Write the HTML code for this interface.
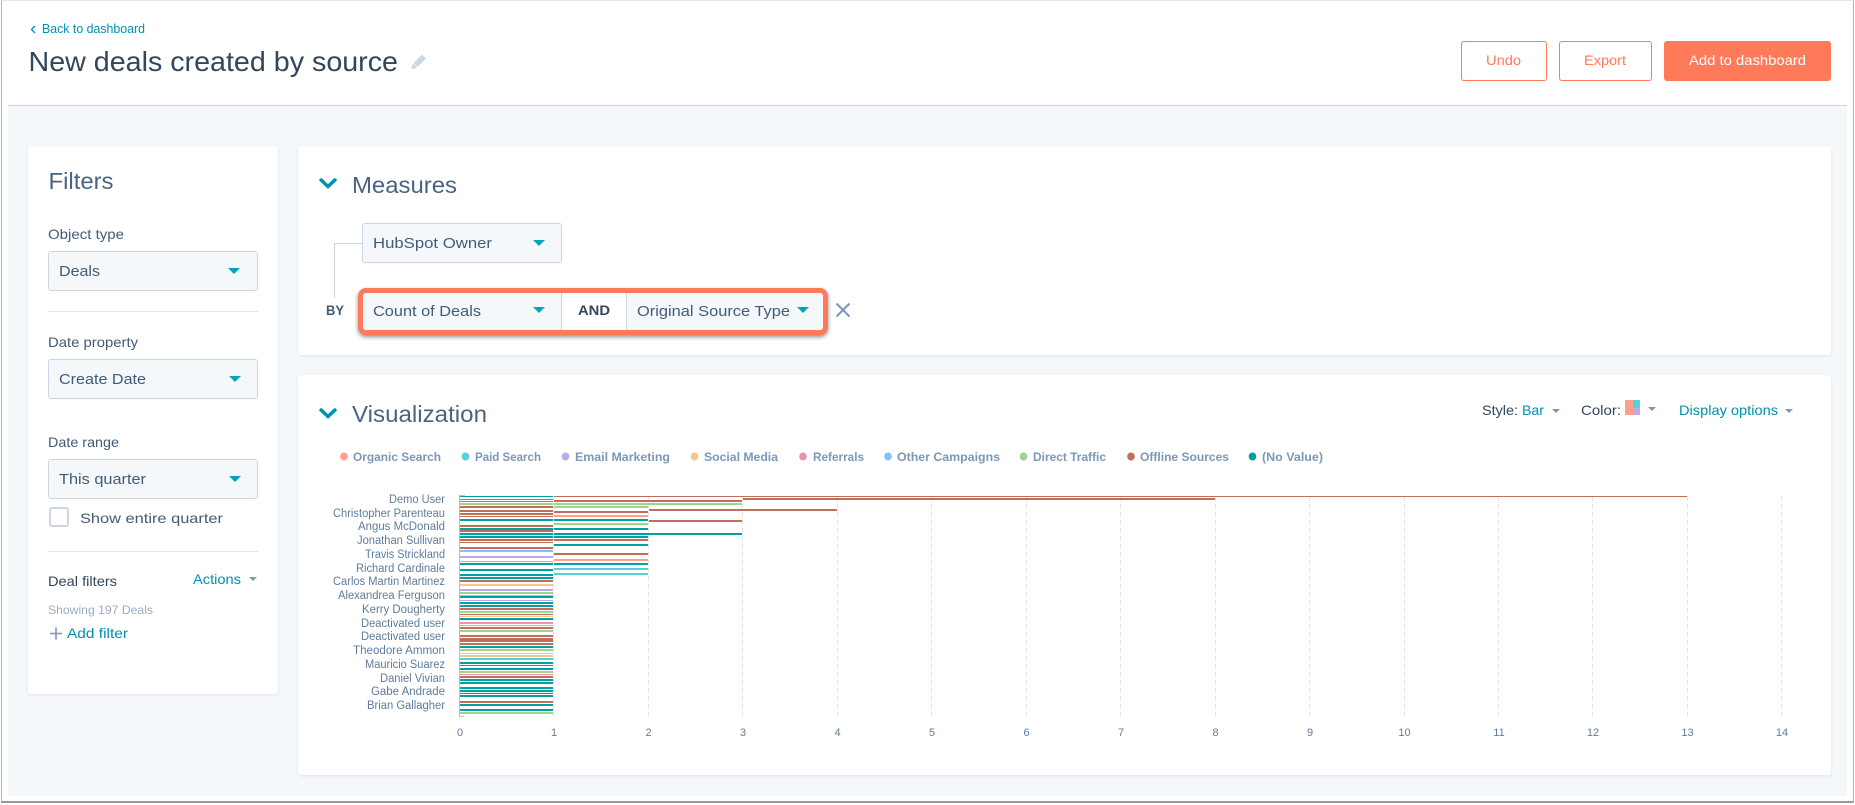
<!DOCTYPE html>
<html lang="en"><head><meta charset="utf-8"><title>New deals created by source</title>
<style>
html,body{margin:0;padding:0;width:1855px;height:805px;overflow:hidden;background:#fff}
div{position:absolute;box-sizing:border-box}
.sel{background:#f5f8fa;border:1px solid #cbd6e2;border-radius:3px}
.card{background:#fff;border-radius:3px;box-shadow:0 1px 3px rgba(45,62,80,.1)}
.btn{border:1px solid #ff7a59;border-radius:3px;background:#fff}
svg{position:absolute;left:0;top:0}
text{font-family:"Liberation Sans",sans-serif}
.d{fill:#33475b}.m{fill:#425b76}.h{fill:#4a6381}.l{fill:#0091ae}.o{fill:#ff7a59}.n{fill:#5f7c9b}.g{fill:#7c98b6;font-weight:700;font-size:12px}
.t{fill:#00a0a3}.r{fill:#c0705a}.s{fill:#ff9f8c}.c{fill:#51d3d9}.p{fill:#bda9ea}.y{fill:#f5c78e}.k{fill:#ea90b1}.b{fill:#81c1fd}.v{fill:#a2d28f}
.car{fill:#00a4bd}.gc{fill:#7c98b6}
</style></head><body>
<div style="left:1px;top:0;width:1853px;height:803px;border:1px solid #b5b5b5;border-top-color:#e6e6e6;border-bottom:2px solid #9a9a9a;background:#fff"></div>
<div style="left:8px;top:105px;width:1839px;height:691px;background:#f5f8fa;border-top:1px solid #cbd6e2"></div>
<div class="btn" style="left:1461px;top:41px;width:86px;height:40px"></div>
<div class="btn" style="left:1559px;top:41px;width:93px;height:40px"></div>
<div class="btn" style="left:1664px;top:41px;width:167px;height:40px;background:#ff7a59"></div>
<div class="card" style="left:28px;top:146px;width:250px;height:548px"></div>
<div class="card" style="left:298px;top:146px;width:1533px;height:209px"></div>
<div class="card" style="left:298px;top:375px;width:1533px;height:400px"></div>
<div class="sel" style="left:48px;top:251px;width:210px;height:40px"></div>
<div style="left:48px;top:311px;width:210px;height:1px;background:#dfe3eb"></div>
<div class="sel" style="left:48px;top:359px;width:210px;height:40px"></div>
<div class="sel" style="left:48px;top:459px;width:210px;height:40px"></div>
<div style="left:49px;top:507px;width:20px;height:20px;background:#fff;border:2px solid #cbd6e2;border-radius:3px"></div>
<div style="left:48px;top:551px;width:210px;height:1px;background:#dfe3eb"></div>
<div style="left:334px;top:243px;width:28px;height:55px;border-left:1px solid #cbd6e2;border-top:1px solid #cbd6e2"></div>
<div class="sel" style="left:362px;top:223px;width:200px;height:40px"></div>
<div style="left:358px;top:288px;width:470px;height:47px;border:5px solid #ff7a59;border-radius:8px;background:#fff;box-shadow:0 2px 4px rgba(0,0,0,.45);overflow:hidden">
<div style="left:0;top:0;width:199px;height:37px;background:#f5f8fa;border-right:1px solid #cbd6e2"></div>
<div style="left:263px;top:0;width:197px;height:37px;background:#f5f8fa;border-left:1px solid #cbd6e2"></div>
</div>
<svg width="1855" height="805" viewBox="0 0 1855 805">
<path d="M35 26l-3.500 3.500 3.500 3.500" fill="none" stroke="#0091ae" stroke-width="1.300"/>
<text x="42" y="33" font-size="13" textLength="103" lengthAdjust="spacingAndGlyphs" class="l">Back to dashboard</text>
<text x="28.500" y="71" font-size="27.500" textLength="369.500" lengthAdjust="spacingAndGlyphs" class="d">New deals created by source</text>
<path d="M422 54.500l4 4-9.500 9.500-5 1 1-5z" fill="#cbd6e2"/>
<path d="M413.500 63.500l4 4" stroke="#fff" stroke-width=".8"/>
<text x="1486" y="65" font-size="14" textLength="35" lengthAdjust="spacingAndGlyphs" class="o">Undo</text>
<text x="1584" y="65" font-size="14" textLength="42" lengthAdjust="spacingAndGlyphs" class="o">Export</text>
<text x="1689" y="65" font-size="14" textLength="117" lengthAdjust="spacingAndGlyphs" fill="#fff">Add to dashboard</text>

<text x="48.500" y="189" font-size="23" textLength="65" lengthAdjust="spacingAndGlyphs" class="h">Filters</text>
<text x="48" y="239" font-size="14" textLength="76" lengthAdjust="spacingAndGlyphs" class="m">Object type</text>
<text x="59" y="276" font-size="15" textLength="41" lengthAdjust="spacingAndGlyphs" class="m">Deals</text>
<path d="M228 268h12l-6 6z" class="car"/>
<text x="48" y="347" font-size="14" textLength="90" lengthAdjust="spacingAndGlyphs" class="m">Date property</text>
<text x="59" y="384" font-size="15" textLength="87" lengthAdjust="spacingAndGlyphs" class="m">Create Date</text>
<path d="M229 376h12l-6 6z" class="car"/>
<text x="48" y="447" font-size="14" textLength="71" lengthAdjust="spacingAndGlyphs" class="m">Date range</text>
<text x="59" y="484" font-size="15" textLength="87" lengthAdjust="spacingAndGlyphs" class="m">This quarter</text>
<path d="M229 476h12l-6 6z" class="car"/>
<text x="80" y="523" font-size="14" textLength="143" lengthAdjust="spacingAndGlyphs" class="m">Show entire quarter</text>
<text x="48" y="586" font-size="14" textLength="69" lengthAdjust="spacingAndGlyphs" class="d">Deal filters</text>
<text x="193" y="584" font-size="14" textLength="48" lengthAdjust="spacingAndGlyphs" class="l">Actions</text>
<path d="M249 577h8l-4 4z" class="gc"/>
<text x="48" y="614" font-size="12" textLength="105" lengthAdjust="spacingAndGlyphs" fill="#99acc2">Showing 197 Deals</text>
<path d="M50 633.500h12M56 627.500v12" stroke="#7c98b6" stroke-width="1.600"/>
<text x="67" y="638" font-size="14" textLength="61" lengthAdjust="spacingAndGlyphs" class="l">Add filter</text>

<path d="M320 179l8 7.500 8-7.500" fill="none" stroke="#0091ae" stroke-width="3.500"/>
<text x="352" y="193" font-size="23" textLength="105" lengthAdjust="spacingAndGlyphs" class="h">Measures</text>
<text x="373" y="248" font-size="15" textLength="119" lengthAdjust="spacingAndGlyphs" class="m">HubSpot Owner</text>
<path d="M533 240h12l-6 6z" class="car"/>
<text x="326" y="315" font-size="14" font-weight="700" textLength="18" lengthAdjust="spacingAndGlyphs" class="m">BY</text>
<text x="373" y="316" font-size="15" textLength="108" lengthAdjust="spacingAndGlyphs" class="m">Count of Deals</text>
<path d="M533 307h12l-6 6z" class="car"/>
<text x="578" y="315" font-size="14" font-weight="700" textLength="32" lengthAdjust="spacingAndGlyphs" class="d">AND</text>
<text x="637" y="316" font-size="15" textLength="153" lengthAdjust="spacingAndGlyphs" class="m">Original Source Type</text>
<path d="M797 307h12l-6 6z" class="car"/>
<path d="M836.500 303.500l13 13M849.500 303.500l-13 13" stroke="#7c98b6" stroke-width="2" fill="none"/>

<path d="M320 409l8 7.500 8-7.500" fill="none" stroke="#0091ae" stroke-width="3.500"/>
<text x="352" y="422" font-size="23" textLength="135" lengthAdjust="spacingAndGlyphs" class="h">Visualization</text>

<text x="1482" y="415" font-size="14" textLength="36" lengthAdjust="spacingAndGlyphs" class="d">Style:</text>
<text x="1522" y="415" font-size="14" textLength="22" lengthAdjust="spacingAndGlyphs" class="l">Bar</text>
<path d="M1552 409h8l-4 4z" class="gc"/>
<text x="1581" y="415" font-size="14" textLength="40" lengthAdjust="spacingAndGlyphs" class="d">Color:</text>
<rect x="1625" y="400" width="8" height="15" fill="#ff9f8c"/><rect x="1633" y="400" width="7" height="8" fill="#51d3d9"/><rect x="1633" y="408" width="7" height="7" fill="#bda9ea"/>
<path d="M1648 407h8l-4 4z" class="gc"/>
<text x="1679" y="415" font-size="14" textLength="99" lengthAdjust="spacingAndGlyphs" class="l">Display options</text>
<path d="M1785 409h8l-4 4z" class="gc"/>

<ellipse cx="344" cy="456.500" rx="3.800" ry="4" fill="#ff9f8c"/><text x="353" y="461" textLength="88" lengthAdjust="spacingAndGlyphs" class="g">Organic Search</text>
<ellipse cx="465.500" cy="456.500" rx="3.800" ry="4" fill="#51d3d9"/><text x="475" y="461" textLength="66" lengthAdjust="spacingAndGlyphs" class="g">Paid Search</text>
<ellipse cx="565.500" cy="456.500" rx="3.800" ry="4" fill="#bda9ea"/><text x="575" y="461" textLength="95" lengthAdjust="spacingAndGlyphs" class="g">Email Marketing</text>
<ellipse cx="694.500" cy="456.500" rx="3.800" ry="4" fill="#f5c78e"/><text x="704" y="461" textLength="74" lengthAdjust="spacingAndGlyphs" class="g">Social Media</text>
<ellipse cx="803" cy="456.500" rx="3.800" ry="4" fill="#ea90b1"/><text x="813" y="461" textLength="51" lengthAdjust="spacingAndGlyphs" class="g">Referrals</text>
<ellipse cx="888" cy="456.500" rx="3.800" ry="4" fill="#81c1fd"/><text x="897" y="461" textLength="103" lengthAdjust="spacingAndGlyphs" class="g">Other Campaigns</text>
<ellipse cx="1023.500" cy="456.500" rx="3.800" ry="4" fill="#a2d28f"/><text x="1033" y="461" textLength="73" lengthAdjust="spacingAndGlyphs" class="g">Direct Traffic</text>
<ellipse cx="1131" cy="456.500" rx="3.800" ry="4" fill="#c0705a"/><text x="1140" y="461" textLength="89" lengthAdjust="spacingAndGlyphs" class="g">Offline Sources</text>
<ellipse cx="1252.500" cy="456.500" rx="3.800" ry="4" fill="#00a0a3"/><text x="1262" y="461" textLength="61" lengthAdjust="spacingAndGlyphs" class="g">(No Value)</text>

<g stroke="#dfe3eb" stroke-dasharray="5 3" stroke-width="1">
<path d="M553.500 496V716M648.500 496V716M742.500 496V716M837.500 496V716M931.500 496V716M1026.500 496V716M1120.500 496V716M1215.500 496V716M1309.500 496V716M1404.500 496V716M1498.500 496V716M1592.500 496V716M1687.500 496V716M1781.500 496V716"/>
</g>
<path d="M465 495.500h-5.500V716.500h5" fill="none" stroke="#b3c2d3" stroke-width="1"/>

<g shape-rendering="crispEdges">
<rect x="460" y="496" width="93" height="1" class="t"/><rect x="554" y="496" width="1133" height="1" class="r"/>
<rect x="460" y="499" width="93" height="1" class="r"/><rect x="743" y="498" width="472" height="2" class="r"/><rect x="554" y="500" width="188" height="2" class="r"/>
<rect x="460" y="501" width="93" height="1" class="r"/>
<rect x="460" y="503" width="93" height="2" class="v"/><rect x="554" y="503" width="188" height="2" class="v"/>
<rect x="460" y="506" width="93" height="2" class="r"/><rect x="554" y="506" width="94" height="2" class="v"/>
<rect x="649" y="509" width="188" height="2" class="r"/>
<rect x="460" y="510" width="93" height="2" class="r"/><rect x="554" y="511" width="94" height="2" class="r"/>
<rect x="460" y="513" width="93" height="2" class="r"/>
<rect x="460" y="516" width="93" height="1" class="r"/><rect x="554" y="515" width="94" height="2" class="s"/>
<rect x="460" y="519" width="93" height="2" class="t"/><rect x="554" y="519" width="94" height="2" class="t"/><rect x="649" y="520" width="93" height="2" class="r"/>
<rect x="554" y="523" width="94" height="2" class="v"/><rect x="460" y="525" width="93" height="2" class="r"/>
<rect x="460" y="528" width="93" height="2" class="t"/><rect x="554" y="528" width="94" height="2" class="t"/>
<rect x="460" y="530" width="93" height="2" class="r"/>
<rect x="460" y="533" width="93" height="2" class="t"/><rect x="554" y="533" width="188" height="2" class="t"/>
<rect x="460" y="536" width="93" height="2" class="t"/><rect x="554" y="536" width="94" height="2" class="t"/>
<rect x="460" y="539" width="93" height="2" class="r"/><rect x="554" y="539" width="94" height="2" class="r"/>
<rect x="460" y="542" width="93" height="1" class="r"/><rect x="554" y="544" width="94" height="2" class="t"/>
<rect x="460" y="547" width="93" height="2" class="r"/><rect x="460" y="550" width="93" height="2" class="b"/>
<rect x="554" y="553" width="94" height="2" class="r"/><rect x="460" y="556" width="93" height="2" class="p"/>
<rect x="554" y="559" width="94" height="2" class="s"/><rect x="460" y="561" width="93" height="1" class="v"/>
<rect x="460" y="563" width="93" height="2" class="t"/><rect x="554" y="563" width="94" height="2" class="t"/>
<rect x="554" y="568" width="94" height="2" class="c"/><rect x="460" y="569" width="93" height="2" class="t"/>
<rect x="554" y="573" width="94" height="2" class="c"/><rect x="460" y="574" width="93" height="2" class="t"/>
<rect x="460" y="577" width="93" height="2" class="t"/><rect x="460" y="580" width="93" height="2" class="r"/>
<rect x="460" y="584" width="93" height="2" class="y"/><rect x="460" y="589" width="93" height="2" class="p"/>
<rect x="460" y="592" width="93" height="2" class="v"/><rect x="460" y="595" width="93" height="1" class="v"/>
<rect x="460" y="596" width="93" height="2" class="t"/><rect x="460" y="600" width="93" height="1" class="p"/>
<rect x="460" y="602" width="93" height="2" class="t"/><rect x="460" y="605" width="93" height="2" class="t"/>
<rect x="460" y="608" width="93" height="2" class="r"/><rect x="460" y="611" width="93" height="2" class="v"/>
<rect x="460" y="614" width="93" height="1" class="r"/><rect x="460" y="616" width="93" height="1" class="y"/>
<rect x="460" y="618" width="93" height="2" class="t"/><rect x="460" y="622" width="93" height="2" class="k"/>
<rect x="460" y="625" width="93" height="1" class="p"/><rect x="460" y="627" width="93" height="2" class="r"/>
<rect x="460" y="630" width="93" height="2" class="v"/><rect x="460" y="635" width="93" height="2" class="r"/>
<rect x="460" y="638" width="93" height="2" class="r"/><rect x="460" y="640" width="93" height="2" class="r"/>
<rect x="460" y="643" width="93" height="2" class="r"/><rect x="460" y="646" width="93" height="2" class="t"/>
<rect x="460" y="649" width="93" height="2" class="v"/><rect x="460" y="653" width="93" height="1" class="y"/>
<rect x="460" y="655" width="93" height="2" class="y"/><rect x="460" y="658" width="93" height="2" class="c"/>
<rect x="460" y="662" width="93" height="2" class="t"/><rect x="460" y="665" width="93" height="1" class="t"/>
<rect x="460" y="668" width="93" height="2" class="t"/><rect x="460" y="671" width="93" height="2" class="v"/>
<rect x="460" y="674" width="93" height="1" class="k"/><rect x="460" y="676" width="93" height="2" class="r"/>
<rect x="460" y="679" width="93" height="2" class="t"/><rect x="460" y="682" width="93" height="2" class="t"/>
<rect x="460" y="687" width="93" height="2" class="t"/><rect x="460" y="690" width="93" height="2" class="t"/>
<rect x="460" y="693" width="93" height="1" class="t"/><rect x="460" y="695" width="93" height="2" class="t"/>
<rect x="460" y="701" width="93" height="2" class="r"/><rect x="460" y="704" width="93" height="2" class="t"/>
<rect x="460" y="709" width="93" height="2" class="t"/><rect x="460" y="712" width="93" height="2" class="v"/>
</g>

<g font-size="11.500" text-anchor="end" class="n">
<text x="445" y="503" textLength="56" lengthAdjust="spacingAndGlyphs">Demo User</text>
<text x="445" y="517" textLength="112" lengthAdjust="spacingAndGlyphs">Christopher Parenteau</text>
<text x="445" y="530" textLength="87" lengthAdjust="spacingAndGlyphs">Angus McDonald</text>
<text x="445" y="544" textLength="88" lengthAdjust="spacingAndGlyphs">Jonathan Sullivan</text>
<text x="445" y="558" textLength="80" lengthAdjust="spacingAndGlyphs">Travis Strickland</text>
<text x="445" y="572" textLength="89" lengthAdjust="spacingAndGlyphs">Richard Cardinale</text>
<text x="445" y="585" textLength="112" lengthAdjust="spacingAndGlyphs">Carlos Martin Martinez</text>
<text x="445" y="599" textLength="107" lengthAdjust="spacingAndGlyphs">Alexandrea Ferguson</text>
<text x="445" y="613" textLength="83" lengthAdjust="spacingAndGlyphs">Kerry Dougherty</text>
<text x="445" y="627" textLength="84" lengthAdjust="spacingAndGlyphs">Deactivated user</text>
<text x="445" y="640" textLength="84" lengthAdjust="spacingAndGlyphs">Deactivated user</text>
<text x="445" y="654" textLength="92" lengthAdjust="spacingAndGlyphs">Theodore Ammon</text>
<text x="445" y="668" textLength="80" lengthAdjust="spacingAndGlyphs">Mauricio Suarez</text>
<text x="445" y="682" textLength="65" lengthAdjust="spacingAndGlyphs">Daniel Vivian</text>
<text x="445" y="695" textLength="74" lengthAdjust="spacingAndGlyphs">Gabe Andrade</text>
<text x="445" y="709" textLength="78" lengthAdjust="spacingAndGlyphs">Brian Gallagher</text>
</g>
<g font-size="11" text-anchor="middle" class="n">
<text x="460" y="736">0</text><text x="554" y="736">1</text><text x="648.500" y="736">2</text><text x="743" y="736">3</text><text x="837.500" y="736">4</text><text x="932" y="736">5</text><text x="1026.500" y="736">6</text><text x="1121" y="736">7</text><text x="1215.500" y="736">8</text><text x="1310" y="736">9</text><text x="1404.500" y="736">10</text><text x="1499" y="736">11</text><text x="1593" y="736">12</text><text x="1687.500" y="736">13</text><text x="1782" y="736">14</text>
</g>
</svg>
</body></html>
